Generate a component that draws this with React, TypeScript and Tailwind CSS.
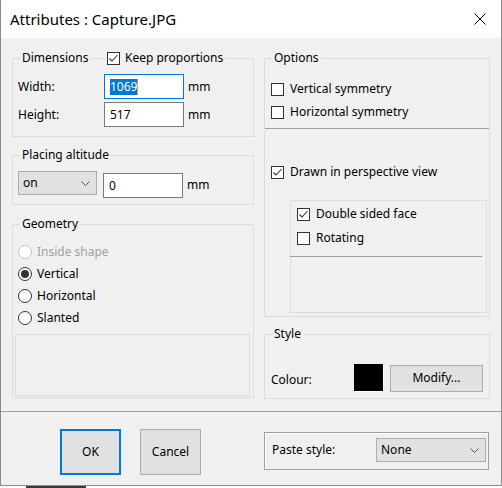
import React from "react";

const Tick = () => (
  <svg width="11" height="11" viewBox="0 0 11 11">
    <polyline points="1.5,5.5 4,8 9.5,2" fill="none" stroke="#333" strokeWidth="1.1" />
  </svg>
);

const Chevron = () => (
  <svg width="9" height="5" viewBox="0 0 9 5">
    <polyline points="0.5,0.5 4.5,4.5 8.5,0.5" fill="none" stroke="#555" strokeWidth="1" />
  </svg>
);

const CheckBox: React.FC<{ checked?: boolean; label: string }> = ({ checked, label }) => (
  <div className="flex items-center h-[22px]">
    <span className="w-[13px] h-[13px] border border-[#333] bg-white flex items-center justify-center shrink-0">
      {checked && <Tick />}
    </span>
    <span className="ml-[6px]">{label}</span>
  </div>
);

const Radio: React.FC<{ checked?: boolean; disabled?: boolean; label: string }> = ({
  checked,
  disabled,
  label,
}) => (
  <div className="flex items-center h-[22px]">
    <span
      className={`w-[14px] h-[14px] rounded-full border bg-white flex items-center justify-center shrink-0 ${
        disabled ? "border-[#c4c4c4]" : "border-[#333]"
      }`}
    >
      {checked && <span className="w-[8px] h-[8px] rounded-full bg-[#333]" />}
    </span>
    <span className={`ml-[5px] ${disabled ? "text-[#a0a0a0]" : ""}`}>{label}</span>
  </div>
);

const Group: React.FC<{ label: string; className?: string; children?: React.ReactNode }> = ({
  label,
  className,
  children,
}) => (
  <div className={`relative border border-[#dcdcdc] ${className ?? ""}`}>
    <span className="absolute left-[7px] top-[-9px] bg-[#f0f0f0] px-[2px] leading-[16px]">
      {label}
    </span>
    {children}
  </div>
);

const TextBox: React.FC<{ focused?: boolean; children?: React.ReactNode; className?: string }> = ({
  focused,
  children,
  className,
}) => (
  <div
    className={`w-[80px] h-[25px] bg-white border flex items-center pl-[5px] ${
      focused ? "border-[#0078d7]" : "border-[#7a7a7a]"
    } ${className ?? ""}`}
  >
    {children}
  </div>
);

const Combo: React.FC<{ value: string; className?: string }> = ({ value, className }) => (
  <div
    className={`h-[24px] bg-[#e1e1e1] border border-[#adadad] flex items-center justify-between pl-[4px] pr-[6px] ${
      className ?? ""
    }`}
  >
    <span>{value}</span>
    <Chevron />
  </div>
);

export default function App() {
  return (
    <div className="w-[502px] h-[488px] bg-white text-[12px] leading-[16px] text-black font-['Noto_Sans','Liberation_Sans',sans-serif]">
      <div className="w-[502px] h-[486px] flex flex-col border-x border-b border-[#8a8a8a] bg-[#f0f0f0]">
        {/* title bar */}
        <div className="h-[38px] bg-white flex items-center justify-between pl-[9px] pr-[15px] shrink-0">
          <span className="text-[15px] leading-[20px]">Attributes : Capture.JPG</span>
          <svg width="12" height="12" viewBox="0 0 12 12">
            <line x1="0.5" y1="0.5" x2="11.5" y2="11.5" stroke="#000" strokeWidth="1" />
            <line x1="11.5" y1="0.5" x2="0.5" y2="11.5" stroke="#000" strokeWidth="1" />
          </svg>
        </div>

        {/* main area */}
        <div className="h-[373px] flex pt-[20px] pl-[11px] gap-[10px]">
          {/* left column */}
          <div className="w-[242px] flex flex-col">
            <Group label="Dimensions" className="h-[79px] pt-[15px] px-[5px]">
              <div className="absolute left-[92px] top-[-9px] h-[16px] flex items-center bg-[#f0f0f0] px-[2px]">
                <span className="w-[13px] h-[13px] border border-[#333] bg-white flex items-center justify-center">
                  <Tick />
                </span>
                <span className="ml-[5px]">Keep proportions</span>
              </div>
              <div className="flex items-center h-[25px]">
                <span className="w-[86px]">Width:</span>
                <TextBox focused>
                  <span className="bg-[#0078d7] text-white border-r border-[#f39a2c] leading-[16px]">1069</span>
                </TextBox>
                <span className="ml-[4px]">mm</span>
              </div>
              <div className="flex items-center h-[25px] mt-[3px]">
                <span className="w-[86px]">Height:</span>
                <TextBox>517</TextBox>
                <span className="ml-[4px]">mm</span>
              </div>
            </Group>

            <Group label="Placing altitude" className="h-[50px] mt-[18px] pt-[15px] px-[5px]">
              <div className="flex items-start">
                <Combo value="on" className="w-[79px]" />
                <TextBox className="ml-[6px] mt-[2px] h-[24px]">0</TextBox>
                <span className="ml-[4px] mt-[6px]">mm</span>
              </div>
            </Group>

            <Group label="Geometry" className="h-[174px] mt-[19px] pt-[16px]">
              <div className="px-[5px]">
                <Radio disabled label="Inside shape" />
                <Radio checked label="Vertical" />
                <Radio label="Horizontal" />
                <Radio label="Slanted" />
              </div>
              <div className="mt-[5px] ml-[2px] w-[235px] h-[62px] border border-[#dcdcdc]" />
            </Group>
          </div>

          {/* right column */}
          <div className="w-[226px] flex flex-col">
            <Group label="Options" className="h-[259px] pt-[19px]">
              <div className="px-[6px]">
                <CheckBox label="Vertical symmetry" />
                <div className="mt-[1px]">
                  <CheckBox label="Horizontal symmetry" />
                </div>
              </div>
              <div className="mt-[5px] h-[1px] bg-[#a0a0a0]" />
              <div className="px-[6px] mt-[32px]">
                <CheckBox checked label="Drawn in perspective view" />
              </div>
              <div className="mt-[17px] ml-[25px] w-[197px] h-[113px] border border-[#dcdcdc] pt-[2px]">
                <div className="px-[6px]">
                  <CheckBox checked label="Double sided face" />
                  <div className="mt-[2px]">
                    <CheckBox label="Rotating" />
                  </div>
                </div>
                <div className="mt-[7px] -ml-[1px] w-[192px] h-[1px] bg-[#a0a0a0]" />
              </div>
            </Group>

            <Group label="Style" className="h-[65px] mt-[17px] pt-[29px] px-[6px]">
              <div className="flex items-center">
                <span className="w-[84px] pt-[3px]">Colour:</span>
                <span className="w-[30px] h-[28px] bg-black border-r border-b border-white" />
                <div className="ml-[6px] w-[94px] h-[27px] bg-[#e1e1e1] border border-[#adadad] flex items-center justify-center">
                  Modify...
                </div>
              </div>
            </Group>
          </div>
        </div>

        <div className="h-[1px] bg-[#a0a0a0] shrink-0" />

        {/* bottom buttons */}
        <div className="flex items-start pt-[17px] pl-[59px]">
          <div className="w-[61px] h-[46px] bg-[#e1e1e1] border-2 border-[#0078d7] flex items-center justify-center">
            OK
          </div>
          <div className="ml-[19px] w-[61px] h-[46px] bg-[#e1e1e1] border border-[#adadad] flex items-center justify-center">
            Cancel
          </div>
          <div className="ml-[63px] mt-[3px] w-[225px] h-[38px] border border-[#a0a0a0] shadow-[inset_1px_1px_0_#fff] flex items-start pt-[5px] pl-[7px]">
            <span className="w-[104px] h-[24px] flex items-center">Paste style:</span>
            <Combo value="None" className="w-[110px]" />
          </div>
        </div>
      </div>
      <div className="h-[2px] flex">
        <div className="ml-[26px] w-[60px] h-[2px] bg-[#3c3c3c]" />
      </div>
    </div>
  );
}
